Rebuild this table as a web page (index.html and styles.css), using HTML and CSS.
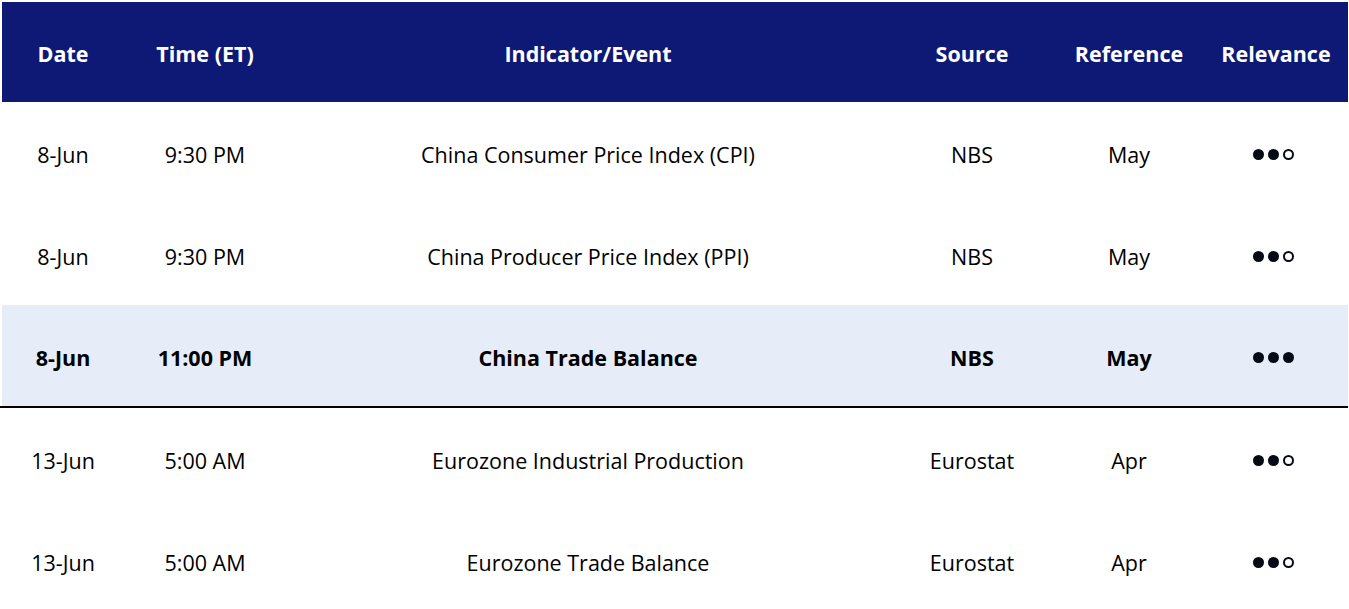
FILE: index.html
```html
<!DOCTYPE html>
<html lang="en">
<head>
<meta charset="utf-8">
<title>Economic Calendar</title>
<link rel="stylesheet" href="styles.css">
</head>
<body>
<div class="calendar">
  <div class="row head">
    <div class="cell">Date</div>
    <div class="cell">Time (ET)</div>
    <div class="cell">Indicator/Event</div>
    <div class="cell">Source</div>
    <div class="cell">Reference</div>
    <div class="cell">Relevance</div>
  </div>
  <div class="row r1">
    <div class="cell">8-Jun</div>
    <div class="cell">9:30 PM</div>
    <div class="cell">China Consumer Price Index (CPI)</div>
    <div class="cell">NBS</div>
    <div class="cell">May</div>
    <div class="cell"><span class="dots"><span class="dot"></span><span class="dot"></span><span class="dot empty"></span></span></div>
  </div>
  <div class="row r2">
    <div class="cell">8-Jun</div>
    <div class="cell">9:30 PM</div>
    <div class="cell">China Producer Price Index (PPI)</div>
    <div class="cell">NBS</div>
    <div class="cell">May</div>
    <div class="cell"><span class="dots"><span class="dot"></span><span class="dot"></span><span class="dot empty"></span></span></div>
  </div>
  <div class="row r3 highlight">
    <div class="cell">8-Jun</div>
    <div class="cell">11:00 PM</div>
    <div class="cell">China Trade Balance</div>
    <div class="cell">NBS</div>
    <div class="cell">May</div>
    <div class="cell"><span class="dots"><span class="dot"></span><span class="dot"></span><span class="dot"></span></span></div>
  </div>
  <div class="divider"></div>
  <div class="row r4">
    <div class="cell">13-Jun</div>
    <div class="cell">5:00 AM</div>
    <div class="cell">Eurozone Industrial Production</div>
    <div class="cell">Eurostat</div>
    <div class="cell">Apr</div>
    <div class="cell"><span class="dots"><span class="dot"></span><span class="dot"></span><span class="dot empty"></span></span></div>
  </div>
  <div class="row r5">
    <div class="cell">13-Jun</div>
    <div class="cell">5:00 AM</div>
    <div class="cell">Eurozone Trade Balance</div>
    <div class="cell">Eurostat</div>
    <div class="cell">Apr</div>
    <div class="cell"><span class="dots"><span class="dot"></span><span class="dot"></span><span class="dot empty"></span></span></div>
  </div>
</div>
</body>
</html>
```
FILE: styles.css
```css
html, body {
  margin: 0;
  padding: 0;
  background: #ffffff;
}

body {
  font-family: "Open Sans", "Noto Sans", sans-serif;
  font-size: 21.5px;
  color: #000000;
  overflow: hidden;
}

.calendar {
  padding: 2px 1px 0 2px;
  width: 1346px;
}

.row {
  display: grid;
  grid-template-columns: 122px 162px 604px 164px 150px 144px;
  height: 102px;
}

.row.head {
  height: 100px;
  background: #0e1975;
  color: #ffffff;
  font-weight: 700;
}

.row.r2,
.row.r3 {
  height: 101px;
}

.row.highlight {
  background: #e7edf8;
  font-weight: 700;
}

.cell {
  display: flex;
  align-items: center;
  justify-content: center;
  padding-top: 3px;
  white-space: nowrap;
}

.divider {
  height: 2px;
  background: #000000;
  margin-left: -2px;
  width: 1348px;
}

.dots {
  display: inline-flex;
  align-items: center;
  gap: 4px;
  margin-right: 5px;
}

.dot {
  width: 11px;
  height: 11px;
  border-radius: 50%;
  background: #050a14;
  box-sizing: border-box;
}

.dot.empty {
  background: transparent;
  border: 2px solid #050a14;
}
```
